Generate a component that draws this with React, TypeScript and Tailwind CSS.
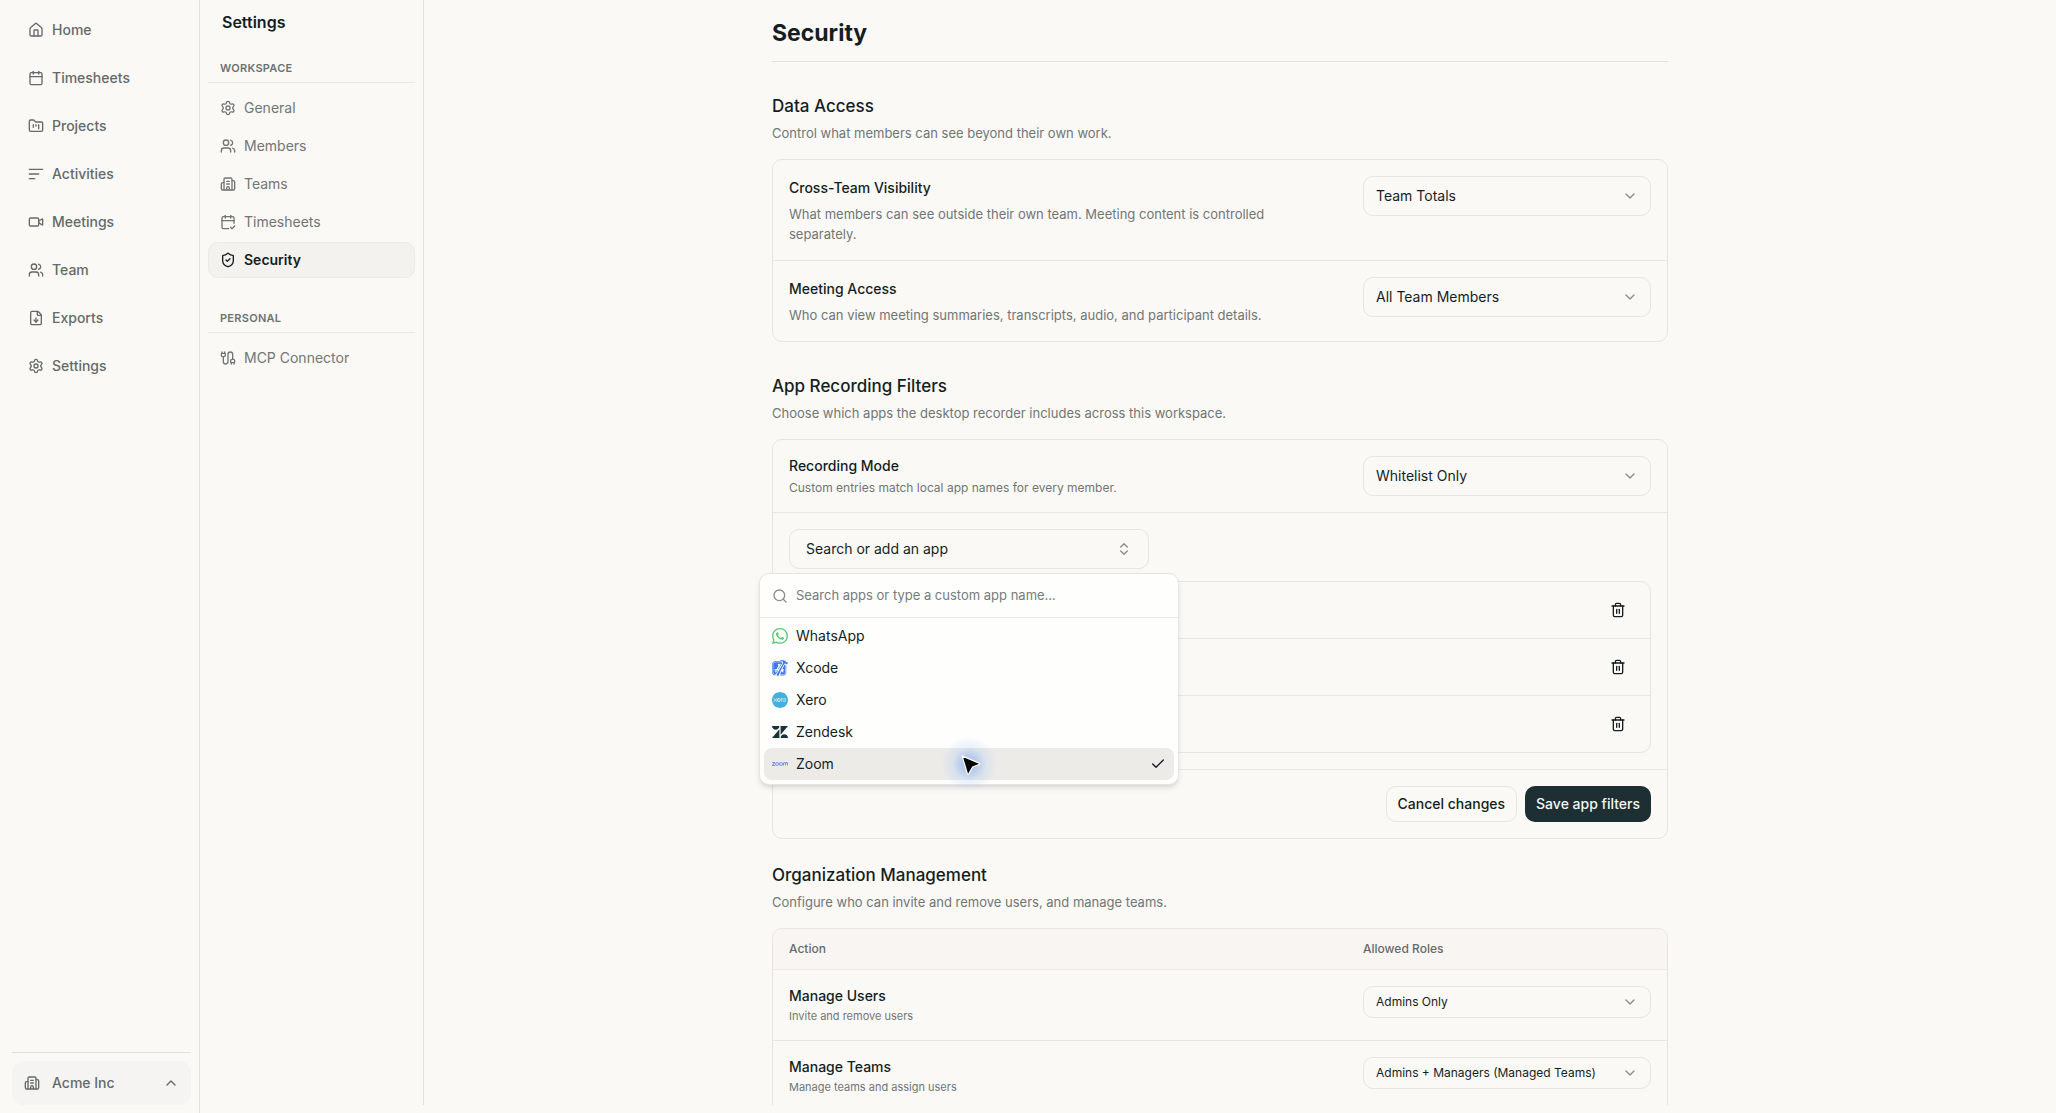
import { useState } from 'react';
import type { ReactNode } from 'react';
import {
  Building2,
  Cable,
  Calendar,
  CalendarCheck2,
  Check,
  ChevronDown,
  ChevronsUpDown,
  ChevronUp,
  FileDown,
  FolderKanban,
  House,
  Search,
  Settings,
  ShieldCheck,
  Trash2,
  Users,
  Video,
} from 'lucide-react';
import { SiWhatsapp, SiXcode, SiXero, SiZendesk, SiZoom } from 'react-icons/si';
import clsx from 'clsx';

function ActivitiesIcon({ className }: { className?: string }) {
  return (
    <svg viewBox="0 0 24 24" fill="none" stroke="currentColor" strokeWidth={2} strokeLinecap="round" className={className}>
      <path d="M2 5h20M2 12h14M2 19h8" />
    </svg>
  );
}

const mainNav = [
  { label: 'Home', icon: House },
  { label: 'Timesheets', icon: Calendar },
  { label: 'Projects', icon: FolderKanban },
  { label: 'Activities', icon: ActivitiesIcon },
  { label: 'Meetings', icon: Video },
  { label: 'Team', icon: Users },
  { label: 'Exports', icon: FileDown },
  { label: 'Settings', icon: Settings },
];

const workspaceNav = [
  { label: 'General', icon: Settings },
  { label: 'Members', icon: Users },
  { label: 'Teams', icon: Building2 },
  { label: 'Timesheets', icon: CalendarCheck2 },
  { label: 'Security', icon: ShieldCheck },
];

const personalNav = [{ label: 'MCP Connector', icon: Cable }];

const apps = [
  { name: 'WhatsApp', icon: SiWhatsapp, color: 'text-[#5fc878]' },
  { name: 'Xcode', icon: SiXcode, color: 'text-[#3f78ec]' },
  { name: 'Xero', icon: SiXero, color: 'text-[#45b0dc]' },
  { name: 'Zendesk', icon: SiZendesk, color: 'text-[#17333a]' },
  { name: 'Zoom', icon: SiZoom, color: 'text-[#4a6cf0]' },
];

const permissions = [
  {
    id: 'manage-users',
    title: 'Manage Users',
    description: 'Invite and remove users',
    options: ['Admins Only', 'Admins + Managers'],
  },
  {
    id: 'manage-teams',
    title: 'Manage Teams',
    description: 'Manage teams and assign users',
    options: ['Admins + Managers (Managed Teams)', 'Admins Only'],
  },
];

function SelectField({ id, options, small }: { id: string; options: string[]; small?: boolean }) {
  const [value, setValue] = useState(options[0]);

  return (
    <div className="relative w-72 shrink-0">
      <select
        id={id}
        value={value}
        onChange={(e) => setValue(e.target.value)}
        className={clsx(
          'block w-full appearance-none rounded-[10px] border border-[#e6e5e2] bg-transparent pr-9 pl-3 text-[#151e1e]',
          small ? 'h-8 text-xs' : 'h-10 text-sm'
        )}
      >
        {options.map((option) => (
          <option key={option}>{option}</option>
        ))}
      </select>
      <div className="pointer-events-none absolute inset-y-0 right-[13px] flex items-center">
        <ChevronDown className="size-4 text-[#8a8d8b]" />
      </div>
    </div>
  );
}

function SettingsNav({ title, items, active }: { title: string; items: typeof workspaceNav; active?: string }) {
  return (
    <section>
      <h3 className="border-b border-[#e9e8e5] px-3 pb-1.5 text-[11px] leading-4 font-semibold tracking-wide text-[#6d7271] uppercase">
        {title}
      </h3>
      <ul className="mt-[7px] space-y-0.5">
        {items.map(({ label, icon: Icon }) => (
          <li key={label}>
            <a
              href="#"
              className={clsx(
                'flex h-9 items-center gap-2 rounded-[10px] border px-[11px] text-sm',
                label === active
                  ? 'border-[#ebeae7] bg-[#f3f2ef] font-semibold text-[#151e1e]'
                  : 'border-transparent text-[#717675]'
              )}
            >
              <Icon className="size-4" />
              {label}
            </a>
          </li>
        ))}
      </ul>
    </section>
  );
}

function Section({ title, description, children }: { title: string; description: string; children: ReactNode }) {
  return (
    <section>
      <h2 className="mb-1 text-[17px] leading-[25px] font-medium text-[#151e1e]">{title}</h2>
      <p className="mb-4 text-[13px] leading-5 text-[#717675]">{description}</p>
      <div className="rounded-[10px] border border-[#e6e5e2]">{children}</div>
    </section>
  );
}

function AccessRow({ id, title, description, options }: { id: string; title: string; description: string; options: string[] }) {
  return (
    <div className="flex items-start justify-between gap-8 p-4">
      <div className="max-w-lg">
        <label htmlFor={id} className="block text-sm leading-6 font-medium text-[#151e1e]">
          {title}
        </label>
        <p className="mt-1 max-w-[500px] text-[13px] leading-5 text-[#717675]">{description}</p>
      </div>
      <SelectField id={id} options={options} />
    </div>
  );
}

function AppPicker() {
  const [query, setQuery] = useState('');
  const selected = 'Zoom';
  const matches = apps.filter((app) => app.name.toLowerCase().includes(query.toLowerCase()));

  return (
    <div className="relative w-[360px]">
      <button
        type="button"
        aria-expanded="true"
        className="flex h-10 w-full items-center justify-between rounded-[10px] border border-[#e6e5e2] px-4 text-sm text-[#151e1e]"
      >
        Search or add an app
        <ChevronsUpDown className="size-4 text-[#8a8d8b]" />
      </button>

      <div className="absolute top-11 -left-[30px] z-10 w-[420px] rounded-[10px] border border-[#e6e5e2] bg-[#fefefd] shadow-md">
        <div className="flex h-11 items-center gap-2 border-b border-[#e9e8e5] px-3">
          <Search className="size-4 text-[#8a8d8b]" />
          <input
            type="text"
            aria-label="Search apps"
            value={query}
            onChange={(e) => setQuery(e.target.value)}
            placeholder="Search apps or type a custom app name..."
            className="flex-1 text-[13px] text-[#151e1e] outline-none placeholder:text-[#777b7a]"
          />
        </div>
        <ul className="px-1 pt-0.5 pb-1">
          {matches.map(({ name, icon: Icon, color }) => (
            <li key={name} className="relative">
              <button
                type="button"
                className={clsx(
                  'flex h-8 w-full items-center gap-2 rounded-lg px-2 text-sm text-[#151e1e]',
                  name === selected && 'bg-[#ecebe8]'
                )}
              >
                <Icon className={clsx('size-4', color)} />
                {name}
                {name === selected && <Check className="ml-auto size-4" />}
              </button>
              {name === selected && <Pointer />}
            </li>
          ))}
        </ul>
      </div>
    </div>
  );
}

function Pointer() {
  return (
    <div className="pointer-events-none absolute inset-0 flex items-center justify-center">
      <div className="flex size-14 items-center justify-center rounded-full bg-[radial-gradient(closest-side,rgba(96,150,240,0.6),rgba(150,190,250,0.2)_60%,transparent)]">
        <svg viewBox="0 0 20 20" className="size-6">
          <path
            d="M4.200 3.200 18.400 9.300c.6.3.6 1-.1 1.200l-5.300 2-3.100 5.500c-.4.6-1.100.5-1.300-.1Z"
            fill="#050505"
            stroke="#fff"
            strokeWidth="1"
            strokeLinejoin="round"
          />
        </svg>
      </div>
    </div>
  );
}

export default function App() {
  return (
    <div className="flex h-screen overflow-hidden bg-[#faf9f6] font-[Inter,sans-serif] text-[#151e1e] antialiased">
      <aside className="flex w-[200px] shrink-0 flex-col border-r border-[#e3e2df] pt-3 pr-2 pb-2 pl-3">
        <nav className="flex flex-col gap-3">
          {mainNav.map(({ label, icon: Icon }) => (
            <a key={label} href="#" className="flex h-9 items-center gap-2 px-4 text-sm font-medium text-[#656a69]">
              <Icon className="size-4" />
              {label}
            </a>
          ))}
        </nav>
        <div className="mt-auto border-t border-[#e3e2df] pt-2">
          <button
            type="button"
            className="flex h-11 w-full items-center gap-3 rounded-xl bg-[#f5f4f2] px-3 text-sm font-medium text-[#656a69]"
          >
            <Building2 className="size-4" />
            Acme Inc
            <ChevronUp className="ml-auto size-4" />
          </button>
        </div>
      </aside>

      <div className="flex min-w-0 flex-1 pb-2">
        <aside className="w-56 shrink-0 border-r border-[#e3e2df] px-2 pt-2.5">
          <h2 className="px-3.5 text-base leading-6 font-semibold">Settings</h2>
          <div className="mt-[26px] space-y-8">
            <SettingsNav title="Workspace" items={workspaceNav} active="Security" />
            <SettingsNav title="Personal" items={personalNav} />
          </div>
        </aside>

        <main className="min-w-0 flex-1 overflow-hidden pr-10">
          <div className="mx-auto max-w-4xl">
            <h1 className="border-b border-[#e3e2df] pt-[17px] pb-[11px] text-[23px] leading-[33px] font-bold">Security</h1>

            <div className="mt-8">
              <Section title="Data Access" description="Control what members can see beyond their own work.">
                <div className="divide-y divide-[#e6e5e2]">
                  <AccessRow
                    id="cross-team"
                    title="Cross-Team Visibility"
                    description="What members can see outside their own team. Meeting content is controlled separately."
                    options={['Team Totals', 'Full Details', 'Nothing']}
                  />
                  <AccessRow
                    id="meeting-access"
                    title="Meeting Access"
                    description="Who can view meeting summaries, transcripts, audio, and participant details."
                    options={['All Team Members', 'Participants Only']}
                  />
                </div>
              </Section>
            </div>

            <div className="mt-8">
              <Section title="App Recording Filters" description="Choose which apps the desktop recorder includes across this workspace.">
                <div className="flex items-start justify-between border-b border-[#e9e8e5] p-4">
                  <div>
                    <label htmlFor="recording-mode" className="block text-sm leading-5 font-medium">
                      Recording Mode
                    </label>
                    <p className="mt-1 text-xs leading-4 text-[#717675]">Custom entries match local app names for every member.</p>
                  </div>
                  <SelectField id="recording-mode" options={['Whitelist Only', 'Blacklist Only', 'Record Everything']} />
                </div>
                <div className="space-y-3 p-4">
                  <AppPicker />
                  <ul className="divide-y divide-[#e9e8e5] rounded-[10px] border border-[#e6e5e2]">
                    {[1, 2, 3].map((row) => (
                      <li key={row} className="flex items-center justify-end px-4 py-3">
                        <button type="button" aria-label="Remove app" className="flex size-8 items-center justify-center">
                          <Trash2 className="size-4" />
                        </button>
                      </li>
                    ))}
                  </ul>
                </div>
                <div className="flex justify-end gap-2 border-t border-[#e9e8e5] p-4">
                  <button type="button" className="h-9 rounded-[10px] border border-[#e6e5e2] px-[11px] text-sm font-medium">
                    Cancel changes
                  </button>
                  <button type="button" className="h-9 rounded-[10px] bg-[#1d2f33] px-[11px] text-sm font-medium text-[#f5f5f2]">
                    Save app filters
                  </button>
                </div>
              </Section>
            </div>

            <div className="mt-6">
              <Section title="Organization Management" description="Configure who can invite and remove users, and manage teams.">
                <table className="w-full border-separate border-spacing-0 text-left">
                  <thead>
                    <tr className="text-xs leading-4 text-[#656a69]">
                      <th className="rounded-tl-[10px] border-b border-[#e9e8e5] bg-[#f9f5f3] px-4 py-3 font-medium">Action</th>
                      <th className="w-[304px] rounded-tr-[10px] border-b border-[#e9e8e5] bg-[#f9f5f3] py-3 pr-4 font-medium">Allowed Roles</th>
                    </tr>
                  </thead>
                  <tbody>
                    {permissions.map((permission) => (
                      <tr key={permission.id} className="align-top">
                        <td className="border-b border-[#e6e5e2] p-4">
                          <label htmlFor={permission.id} className="block text-sm leading-5 font-medium">
                            {permission.title}
                          </label>
                          <p className="mt-0.5 text-[11px] leading-4 text-[#717675]">{permission.description}</p>
                        </td>
                        <td className="border-b border-[#e6e5e2] py-4 pr-4">
                          <SelectField id={permission.id} options={permission.options} small />
                        </td>
                      </tr>
                    ))}
                  </tbody>
                </table>
              </Section>
            </div>
          </div>
        </main>
      </div>
    </div>
  );
}
